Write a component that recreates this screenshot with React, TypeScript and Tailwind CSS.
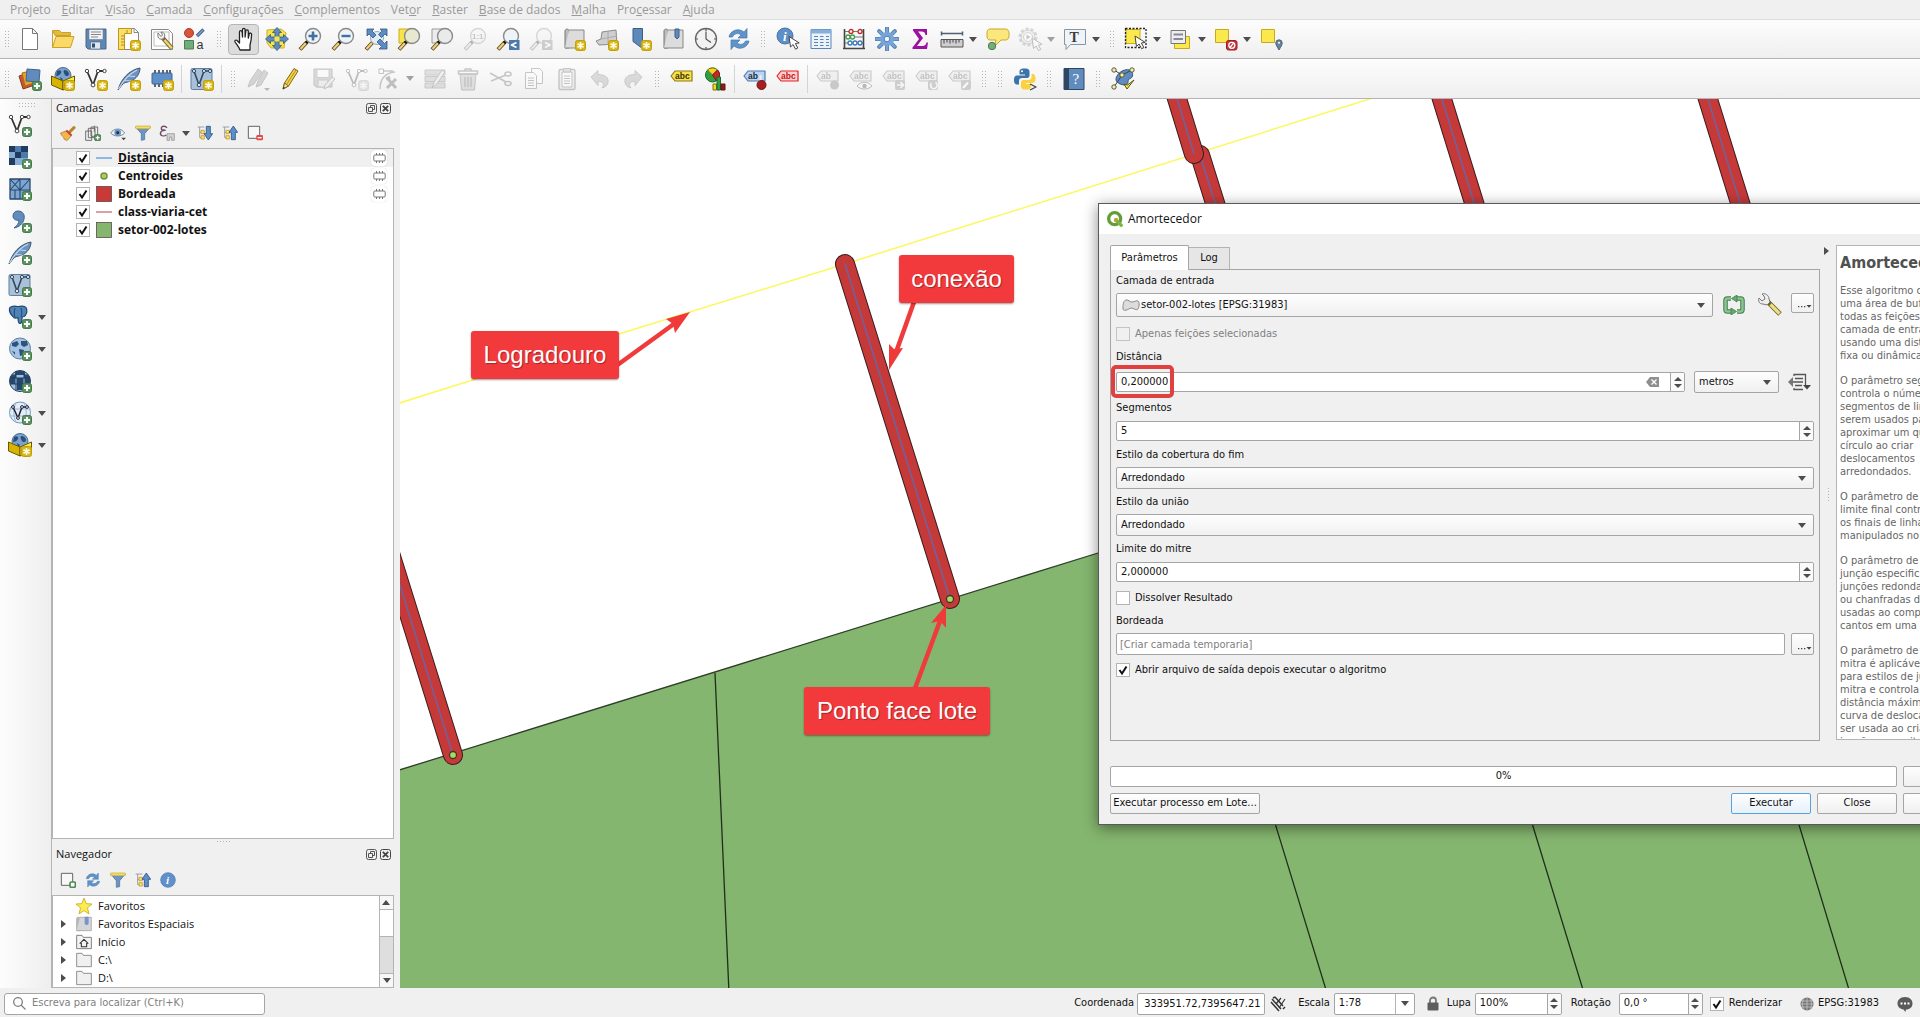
import { useId, type ReactNode } from 'react';

/* ---------- shared drawing helpers ---------- */

function Ico({ children, dim = false, small = false }: { children: ReactNode; dim?: boolean; small?: boolean }) {
  const size = small ? 'size-4 shrink-0' : 'size-6 shrink-0';
  const tone = dim ? ' opacity-30 grayscale' : '';
  return (
    <svg viewBox="0 0 24 24" className={size + tone} fill="none" strokeLinejoin="round" aria-hidden="true">
      {children}
    </svg>
  );
}

const Plus = () => (
  <g>
    <rect x="14.5" y="14.5" width="9" height="9" rx="2" fill="#5b9460" stroke="#45784a" />
    <path d="M19 16v6M16 19h6" stroke="#fff" strokeWidth="2" />
  </g>
);
const Star = () => (
  <g>
    <rect x="13.5" y="13.5" width="10" height="10" rx="2" fill="#d6b51a" stroke="#c4a000" />
    <path d="M18.500 15v7M15.400 16.700l6.200 3.600M21.600 16.700l-6.200 3.600" stroke="#fffbe0" strokeWidth="1.700" />
  </g>
);
const Lens = ({ fill = '#eef3f7' }: { fill?: string }) => (
  <g>
    <path d="M9 15L2 22.500" stroke="#5a4a20" strokeWidth="4" />
    <path d="M8 16L2.500 22" stroke="#f2cf7c" strokeWidth="2.200" />
    <path d="M10 14l-2 2" stroke="#111" strokeWidth="3" />
    <circle cx="15" cy="9" r="7.500" fill={fill} stroke="#8a8a8a" strokeWidth="1.400" />
  </g>
);
const Vee = () => (
  <g>
    <path d="M3 4l6 14 5-14h6" stroke="#333" strokeWidth="1.800" />
    <g fill="#fff" stroke="#444">
      <circle cx="3" cy="4" r="1.700" />
      <circle cx="14" cy="4" r="1.700" />
      <circle cx="20.500" cy="4" r="1.700" />
      <circle cx="9" cy="18" r="1.900" />
    </g>
  </g>
);
const Feather = () => (
  <g>
    <path d="M1 23C4 12 12 3 23 1c0 6-4 11-9 13-4 1.500-7 1-9 4z" fill="#6a93c1" stroke="#42586f" />
    <path d="M1.500 22C7 12 12 7 20 3M8 13.500l6 .5M12 9l6 .5" stroke="#c8daee" strokeWidth="1.100" />
  </g>
);
const VBox = () => (
  <g>
    <rect x="1" y="1.500" width="21" height="21" rx="1.500" fill="#a9c0da" stroke="#5f7f9f" />
    <path d="M4 4l5 14 5-14h6" stroke="#33475b" strokeWidth="1.600" />
    <g fill="#dfe9f3" stroke="#33475b">
      <circle cx="4" cy="4" r="1.600" />
      <circle cx="14" cy="4" r="1.600" />
      <circle cx="20" cy="4" r="1.600" />
      <circle cx="9" cy="18" r="1.800" />
    </g>
  </g>
);
const GlobeBox = () => (
  <g>
    <circle cx="12" cy="8.500" r="8" fill="#7ba3cf" stroke="#4a6a8c" />
    <path d="M6 4c3-2 5 0 4 2s-3 3-5 3M13 3c3 0 5 2 5 4s-3 3-4 1-2-3-1-5zM9 10l3 2-2 2z" fill="#2c4f77" />
    <path d="M.5 9L12 14v9L.5 18z" fill="#d8b400" stroke="#6a5600" />
    <path d="M23.500 9L12 14v9l11.500-5z" fill="#fcea4c" stroke="#6a5600" />
  </g>
);
const Refresh = () => (
  <g fill="#5f93c9" stroke="#4378ad" strokeWidth=".7">
    <path d="M2 10c1-6 9-10 15-5l3-3.500V11h-9l3-3c-3-2.500-7-1.500-8.500 2z" />
    <path d="M22 14c-1 6-9 10-15 5l-3 3.500V13h9l-3 3c3 2.500 7 1.500 8.500-2z" />
  </g>
);
const Cursor = ({ x, y }: { x: number; y: number }) => (
  <path
    transform={`translate(${x} ${y})`}
    d="M0 0l1.500 10.500 2.600-2.500 2.400 4.700 2.300-1.200-2.400-4.500 3.800-.6z"
    fill="#fff"
    stroke="#444"
  />
);
const Tag = ({ fill, stroke }: { fill: string; stroke: string }) => (
  <path d="M1 9l4-5h17v10H5z" fill={fill} stroke={stroke} strokeWidth="1.200" />
);
const TagText = ({ fill, t = 'abc' }: { fill: string; t?: string }) => (
  <text x="5" y="12" fontSize="8.500" fontWeight="700" fill={fill} fontFamily="Liberation Sans, sans-serif">
    {t}
  </text>
);
const Funnel = () => (
  <g>
    <path d="M1 3h22l-8.500 10v9l-5 1V13z" fill="#6c95c4" stroke="#476b94" />
    <rect x="1" y="1.500" width="22" height="4" rx="1" fill="#f4dc6a" stroke="#c9a92a" />
  </g>
);
const TreeArrow = ({ up = false }: { up?: boolean }) => (
  <g>
    <path d="M1 3h10M4 3v16h5M4 11h5" stroke="#999" strokeWidth="1.400" />
    <rect x="6" y="8" width="5" height="5" fill="#ffe066" stroke="#b78b1b" />
    <rect x="6" y="16" width="5" height="5" fill="#ffe066" stroke="#b78b1b" />
    <path
      d={up ? 'M14 22V11h-3.500l6.500-9.500 6.500 9.500H20v11z' : 'M14 2v11h-3.500l6.500 9.500 6.500-9.500H20V2z'}
      fill="#5f8fc8"
      stroke="#2f5687"
      strokeWidth="1.300"
    />
  </g>
);
const Sheet = () => (
  <g>
    <path d="M3 4c0-2.500 4-2.500 4 0v17H3z" fill="#bdbdbd" stroke="#777" />
    <path d="M7 3h15v18H3" fill="#dcdcdc" stroke="#888" />
  </g>
);

/* ---------- icons by name ---------- */

const icons: Record<string, ReactNode> = {
  newFile: <path d="M4.500 1.500h10l5 5v16h-15zM14.500 1.500v5h5" fill="#fff" stroke="#777" />,
  open: (
    <g stroke="#c9a227">
      <path d="M1.500 3.500h7l2 2h9v3H4z" fill="#e5b93c" />
      <path d="M1.500 4v16.500L5 9.500h18l-3.500 11h-18" fill="#fbd968" />
    </g>
  ),
  save: (
    <g>
      <path d="M2 2h20v20H4l-2-2z" fill="#5e86b4" stroke="#4a688c" />
      <rect x="5" y="2.500" width="14" height="10" fill="#f3f3f3" stroke="#6b7f95" strokeWidth=".6" />
      <path d="M7 5h10M7 7.500h10M7 10h7" stroke="#888" />
      <rect x="6.500" y="15" width="10" height="7" fill="#dfe6ee" stroke="#45607f" strokeWidth=".6" />
      <rect x="8" y="16.500" width="3" height="4" fill="#2f4f77" />
    </g>
  ),
  layout: (
    <g>
      <path d="M1.500 1.500h16l4 4v17h-20z" fill="#fff" stroke="#888" />
      <path d="M1.500 1.500h13v5h-7v16h-6z" fill="#fadf68" stroke="#c0961a" />
      <path d="M4 9h3M4 12h3M4 15h3M4 18h3M10 3v3" stroke="#b08a1a" />
      <path d="M17 1.500v4h4.500" stroke="#888" />
      <Star />
    </g>
  ),
  layouts: (
    <g>
      <path d="M1.500 2.500h17l4 4v16h-21z" fill="#fff" stroke="#888" />
      <rect x="4" y="5" width="15" height="14" stroke="#bbb" />
      <path d="M12 10L22 21.500" stroke="#7c6a2a" strokeWidth="4.200" />
      <path d="M14.500 13l7.300 8.300" stroke="#ecd774" strokeWidth="2.400" />
      <path d="M8 6c-1 4 1 7 5 6l1.500-2c1-3-1-5-3.500-5l1.500 3-1.500 1.500z" fill="#f3f3f3" stroke="#777" />
    </g>
  ),
  style: (
    <g>
      <circle cx="6" cy="6" r="4.500" fill="#d9543a" stroke="#a83c26" />
      <path d="M14 9l6.500-6.500" stroke="#3f648f" strokeWidth="3.400" />
      <path d="M14.500 8.500l5.500-5.500" stroke="#7ba0cb" strokeWidth="1.400" />
      <rect x="1.500" y="13.500" width="9" height="8.500" fill="#72ab7c" stroke="#4a7d55" />
      <text x="13.500" y="22" fontSize="12.500" fill="#333" fontFamily="Liberation Sans, sans-serif">
        a
      </text>
    </g>
  ),
  hand: (
    <path
      d="M8 23c-1-3-3-5-5-8-.8-1.700 1.200-2.600 2.300-1.300L7.500 16V5c0-1.800 2.400-1.800 2.600 0l.4 5V2.800c0-1.800 2.600-1.800 2.600 0V10l.7-6c.2-1.700 2.500-1.500 2.500.2V11l.9-4c.4-1.600 2.500-1.200 2.400.5-.2 5-.6 7.500-1.600 10.500V23z"
      fill="#fff"
      stroke="#222"
      strokeWidth="1.300"
    />
  ),
  pan: (
    <g>
      <path d="M2 3l14-1 5 4-2 15H6l-4-5z" fill="#f8e34a" stroke="#c9b01c" />
      <path
        d="M12 .5l4.500 5h-2.500v4.500h4.500V7.500l5 4.500-5 4.500V14h-4.500v4.500h2.500l-4.500 5-4.500-5h2.500V14H5.500v2.500l-5-4.500 5-4.500V10h4.500V5.500H7.500z"
        fill="#5c8cc4"
        stroke="#34587f"
        strokeWidth=".8"
      />
      <rect x="9.500" y="9.500" width="5" height="5" fill="#f8e34a" />
    </g>
  ),
  zoomIn: (
    <g>
      <Lens />
      <path d="M15 4.500v9M10.500 9h9" stroke="#41709f" strokeWidth="2.600" />
    </g>
  ),
  zoomOut: (
    <g>
      <Lens />
      <path d="M10.500 9h9" stroke="#41709f" strokeWidth="2.400" />
    </g>
  ),
  zoomFull: (
    <g>
      <path d="M9 15L2 22.500" stroke="#5a4a20" strokeWidth="4" />
      <path d="M8 16L2.500 22" stroke="#f2cf7c" strokeWidth="2.200" />
      <circle cx="13" cy="11" r="6.500" fill="#e4ecf3" stroke="#9ab" />
      <path
        d="M3 2h7L8 4l4 4-3 3-4-4-2 2zM23 2v7l-2-2-3.500 3.500-3-3L18 4l-2-2zM23 22h-8l2.500-2.500L13 15l3-3 4.500 4.500L23 14z"
        fill="#5c8cc4"
        stroke="#34587f"
        strokeWidth=".8"
      />
    </g>
  ),
  zoomSel: (
    <g>
      <rect x="2" y="2" width="12" height="14" fill="#f8e34a" stroke="#c9b01c" />
      <Lens fill="#e6e8d0" />
    </g>
  ),
  zoomLayer: (
    <g>
      <rect x="2" y="2" width="12" height="14" fill="#ececec" stroke="#999" />
      <Lens fill="#e9ebea" />
    </g>
  ),
  zoomNative: (
    <g>
      <Lens />
      <text x="9" y="12" fontSize="8" fontWeight="700" fill="#555" fontFamily="Liberation Sans, sans-serif">
        1:1
      </text>
    </g>
  ),
  zoomLast: (
    <g>
      <Lens />
      <rect x="13" y="13" width="10.500" height="10" fill="#4c78ab" />
      <path d="M20.500 15.500l-5 2.500 5 2.500" stroke="#fff" strokeWidth="1.700" />
    </g>
  ),
  zoomNext: (
    <g>
      <Lens />
      <rect x="13" y="13" width="10.500" height="10" fill="#777" />
      <path d="M16 15.500l5 2.500-5 2.500" stroke="#fff" strokeWidth="1.700" />
    </g>
  ),
  newMap: (
    <g>
      <Sheet />
      <Star />
    </g>
  ),
  new3d: (
    <g>
      <path d="M7 5l14-2 1 14-18 1L1 14l5-2z" fill="#cfcfcf" stroke="#8a8a8a" />
      <path d="M6 12l16-3M13 4v14" stroke="#aaa" />
      <Star />
    </g>
  ),
  bookmark: (
    <g>
      <path d="M5 1.500h9.500v20L5 14.500z" fill="#5e8abb" stroke="#3c5f88" />
      <Star />
    </g>
  ),
  bookmarks: (
    <g>
      <Sheet />
      <path d="M14 2h4v8l-2 2-2-2z" fill="#5e8abb" stroke="#3c5f88" />
    </g>
  ),
  clock: (
    <g>
      <circle cx="12" cy="12" r="10.500" fill="#f2f2f2" stroke="#666" strokeWidth="1.300" />
      <path d="M12 4.500V12l5 3.500M12 2v2M12 20v2M2 12h2M20 12h2" stroke="#555" strokeWidth="1.200" />
    </g>
  ),
  refresh: <Refresh />,
  identify: (
    <g>
      <circle cx="9" cy="9" r="8" fill="#5e8fc6" stroke="#4a77a8" />
      <text x="7" y="14" fontSize="13" fontStyle="italic" fontWeight="700" fill="#fff" fontFamily="Liberation Serif, serif">
        i
      </text>
      <Cursor x={13} y={9.500} />
    </g>
  ),
  table: (
    <g>
      <rect x="2" y="2.500" width="20" height="19" fill="#eaf2fa" stroke="#5785b5" />
      <rect x="2" y="2.500" width="20" height="4" fill="#86afd9" />
      <path d="M5 9.500h4M11 9.500h3.500M17 9.500h3M5 12.500h4M11 12.500h3.500M17 12.500h3M5 15.500h4M11 15.500h3.500M17 15.500h3M5 18.500h4M11 18.500h3.500M17 18.500h3" stroke="#5b84b0" />
    </g>
  ),
  abacus: (
    <g>
      <path d="M2.500 2v19M21.500 2v19M1 21.500h22" stroke="#444" strokeWidth="1.600" />
      <path d="M3 4.500h18M3 10h18M3 16h18" stroke="#777" />
      <g strokeWidth="1.300" fill="#fff">
        <g stroke="#c02a2a">
          <circle cx="9" cy="4.500" r="2" />
          <circle cx="18" cy="4.500" r="2" />
        </g>
        <g stroke="#39a04a">
          <circle cx="6" cy="10" r="2" />
          <circle cx="10.500" cy="10" r="2" />
        </g>
        <g stroke="#3c78b8">
          <circle cx="8" cy="16" r="2" />
          <circle cx="13" cy="16" r="2" />
          <circle cx="18" cy="16" r="2" />
        </g>
      </g>
    </g>
  ),
  gear: (
    <g>
      <path d="M12 1v22M1 12h22M4.200 4.200l15.600 15.600M19.800 4.200L4.200 19.800" stroke="#4f7fb5" strokeWidth="4" strokeLinecap="round" />
      <path d="M12 1.500v21M1.500 12h21M4.500 4.500l15 15M19.500 4.500l-15 15" stroke="#78a5d8" strokeWidth="2.400" strokeLinecap="round" />
      <circle cx="12" cy="12" r="7" fill="#78a5d8" />
      <circle cx="12" cy="12" r="2.800" fill="#f4f4f4" stroke="#4f7fb5" />
    </g>
  ),
  sigma: <path d="M5 2h14v6h-1.500c-.5-2.500-1.500-3.500-4-3.500H10l5 6.500-6 8h5.500c2.500 0 3.500-1.500 4-3.500H20l-1 6.500H4.500v-1.500L11 12 5 3.500z" fill="#9c12a0" />,
  ruler: (
    <g>
      <path d="M1 6.500h22M1.500 4.500v4M22.500 4.500v4" stroke="#4d5f73" strokeWidth="1.500" />
      <rect x="1" y="12.500" width="22" height="7.500" fill="#cfcfcf" stroke="#555" />
      <path d="M4 13v3.500M7 13v2.500M10 13v3.500M13 13v2.500M16 13v3.500M19 13v2.500" stroke="#444" />
    </g>
  ),
  tip: (
    <g>
      <path d="M4 2h15c2.500 0 4 1.500 4 4v3c0 2.500-1.500 4-4 4h-4l-7 7 2-7H4c-2 0-3-1.500-3-4V6c0-2.500 1-4 3-4z" fill="#fbe77c" stroke="#c9a92a" />
      <circle cx="6" cy="19" r="3.700" fill="#76ad78" stroke="#4a7c4e" />
    </g>
  ),
  action: (
    <g>
      <circle cx="10" cy="10" r="8" stroke="#888" strokeWidth="3" strokeDasharray="3 2" />
      <circle cx="10" cy="10" r="7" fill="#ddd" stroke="#777" />
      <circle cx="10" cy="10" r="4.500" fill="#fff" stroke="#888" />
      <path d="M8.500 7.500l4 2.500-4 2.500z" fill="#555" />
      <Cursor x={14} y={11} />
    </g>
  ),
  annotation: (
    <g>
      <path d="M1.500 2.500h21v15h-15L3 22.500v-5H1.500z" fill="#eef4f8" stroke="#8795a2" />
      <text x="6.500" y="15" fontSize="14" fontWeight="700" fill="#3b3b3b" fontFamily="Liberation Serif, serif">
        T
      </text>
    </g>
  ),
  select: (
    <g>
      <path d="M2 2.500h14v14H2z" fill="#fae84c" stroke="#c9b01c" />
      <rect x="1.500" y="1.500" width="20.500" height="19" stroke="#222" strokeWidth="1.300" strokeDasharray="2 1.500" />
      <Cursor x={11} y={9} />
    </g>
  ),
  selectValue: (
    <g>
      <rect x="5.500" y="9.500" width="15" height="12" fill="#fae84c" stroke="#c9a81c" />
      <rect x="2" y="3.500" width="14.500" height="13" fill="#eee" stroke="#777" />
      <path d="M4.500 7.500h9.500M4.500 12h9.500" stroke="#889" strokeWidth="2" />
    </g>
  ),
  deselect: (
    <g>
      <rect x="1.500" y="2.500" width="13" height="13" fill="#fae84c" stroke="#c9a81c" />
      <rect x="12.500" y="13.500" width="10.500" height="9.500" rx="2" fill="#c83237" stroke="#9c1f25" />
      <circle cx="17.800" cy="18.300" r="3" stroke="#fff" strokeWidth="1.300" />
      <path d="M16 20.500l3.600-4.300" stroke="#fff" strokeWidth="1.300" />
    </g>
  ),
  selectLoc: (
    <g>
      <rect x="1.500" y="2.500" width="13" height="13" fill="#fae84c" stroke="#c9a81c" />
      <path d="M19 23c-2-3.500-3.200-5-3.200-7a3.200 3.200 0 016.400 0c0 2-1.200 3.500-3.200 7z" fill="#66839c" stroke="#4b667e" />
      <circle cx="19" cy="15.800" r="1" fill="#fff" />
    </g>
  ),
  sources: (
    <g>
      <path d="M1 9l12-4 4 13-12 4z" fill="#c8562f" stroke="#8e3a1c" />
      <path d="M4 6l12-3 3 12-12 4z" fill="#e8a12e" stroke="#a66c12" />
      <path d="M9 2l13 1-1 12-13-1z" fill="#5f8cbd" stroke="#42648b" />
      <Plus />
    </g>
  ),
  geopackage: (
    <g>
      <GlobeBox />
      <Star />
    </g>
  ),
  newShape: (
    <g>
      <Vee />
      <Star />
    </g>
  ),
  newSpatialite: (
    <g>
      <Feather />
      <Star />
    </g>
  ),
  newMemory: (
    <g>
      <path d="M5 3v17M9 3v17M13 3v17M17 3v17M20 3v17" stroke="#333" strokeWidth="1.500" />
      <rect x="2" y="6" width="20" height="11" rx="1" fill="#5f8fc6" stroke="#3d6592" />
      <Star />
    </g>
  ),
  newVirtual: (
    <g>
      <VBox />
      <Star />
    </g>
  ),
  edits: (
    <g>
      <path d="M2 20l2-6L12 2l4 3-8 12zM10 20l2-6 6-11 4 3-7 12z" fill="#888" stroke="#555" />
      <path d="M18 21h6l-3 3z" fill="#333" />
    </g>
  ),
  pencil: (
    <g>
      <path d="M4 22l1.500-6L15 1.500l4 2.500L9.500 19z" fill="#f4d34a" stroke="#7b6514" />
      <path d="M4 22l1.500-6 4 3z" fill="#f0ddb8" stroke="#7b6514" />
      <path d="M7.500 17.500L17 3" stroke="#b48f1c" />
      <path d="M4 22l.6-2.200 1.300 1z" fill="#222" />
    </g>
  ),
  saveEdit: (
    <g>
      <path d="M2 2h18v18H4l-2-2z" fill="#999" stroke="#555" />
      <rect x="5" y="2.500" width="12" height="8" fill="#fff" stroke="#777" />
      <path d="M6 13h10v7H6z" fill="#ddd" stroke="#666" />
      <path d="M12 22l1-4 7-8 3 2-7 8z" fill="#ddd" stroke="#555" />
    </g>
  ),
  vertex: (
    <g>
      <path d="M3 22C3 12 8 6 18 5M4 4h12" stroke="#555" strokeWidth="1.400" />
      <rect x="2" y="2" width="4.500" height="4.500" fill="#fff" stroke="#444" />
      <path d="M10 21l9-9M11 12l8 9M9 12l4-2" stroke="#444" strokeWidth="3" />
    </g>
  ),
  modify: (
    <g>
      <path d="M2 3h20v5H2zM2 9.500h20v5H2zM2 16h20v5H2z" fill="#aaa" stroke="#666" />
      <path d="M9 21l2-6 8-12 3 2-8 12z" fill="#ddd" stroke="#555" />
    </g>
  ),
  trash: (
    <g>
      <path d="M4 7h16l-1.500 16h-13z" fill="#aaa" stroke="#555" />
      <path d="M2.500 4h19v3h-19zM9 4V2h6v2M9 10v10M12 10v10M15 10v10" stroke="#555" strokeWidth="1.500" />
    </g>
  ),
  cut: (
    <g stroke="#555" strokeWidth="1.600">
      <path d="M1 6l16 9M2 14l15-6" />
      <ellipse cx="19" cy="16.500" rx="3" ry="2" />
      <ellipse cx="19" cy="7" rx="3" ry="2" />
    </g>
  ),
  copy: (
    <g stroke="#555" fill="#fff">
      <path d="M9.500 1.500h8l3 3v12h-11z" />
      <path d="M3.500 5.500h8l3 3v13h-11z" />
      <path d="M6 11h6M6 13.500h6M6 16h6M6 18.500h6" />
    </g>
  ),
  paste: (
    <g stroke="#555">
      <rect x="4" y="2.500" width="16" height="20" rx="1.500" fill="#ddd" strokeWidth="1.400" />
      <rect x="7" y="5" width="10" height="15" fill="#fff" />
      <path d="M9 9h6M9 11.500h6M9 14h6M9 16.500h6" />
      <rect x="8.500" y="1.500" width="7" height="3.500" fill="#aaa" />
    </g>
  ),
  undo: <path d="M3 10l7-6.500v4c7 0 11 3 10 8-.6 3-3 5-6 5.500 3-4 1-7-4-6.500v4z" fill="#999" stroke="#666" />,
  redo: <path d="M21 10l-7-6.500v4c-7 0-11 3-10 8 .6 3 3 5 6 5.500-3-4-1-7 4-6.500v4z" fill="#999" stroke="#666" />,
  label: (
    <g>
      <Tag fill="#f8e04a" stroke="#8f7a14" />
      <TagText fill="#3b3208" />
    </g>
  ),
  diagram: (
    <g>
      <circle cx="9.500" cy="8" r="7" fill="#2ea043" stroke="#176b28" />
      <path d="M9.500 8L4.500 3a7 7 0 0110 0z" fill="#f5d427" stroke="#84700c" />
      <path d="M9.500 8l5-5c3 3 2.600 8-1 11z" fill="#c62828" stroke="#801414" />
      <path d="M10 17h3.500v6H10z" fill="#f5d427" stroke="#84700c" />
      <path d="M14 10h3.500v13H14z" fill="#2ea043" stroke="#176b28" />
      <path d="M18 17h4v6h-4z" fill="#8e1c1c" stroke="#611" />
    </g>
  ),
  labelPin: (
    <g>
      <Tag fill="#b8d4f2" stroke="#4a78b0" />
      <TagText fill="#1d2a3a" t="ab" />
      <path d="M17.500 16V8" stroke="#eee" strokeWidth="2" />
      <circle cx="18.500" cy="18" r="4.500" fill="#a81e1e" stroke="#741010" />
    </g>
  ),
  labelRed: (
    <g>
      <Tag fill="#ffd2d2" stroke="#e02020" />
      <TagText fill="#d01010" />
    </g>
  ),
  tagPin: (
    <g>
      <Tag fill="#ddd" stroke="#666" />
      <TagText fill="#444" t="ab" />
      <circle cx="18.500" cy="18" r="4.500" fill="#666" />
    </g>
  ),
  tagEye: (
    <g>
      <Tag fill="#ddd" stroke="#666" />
      <TagText fill="#444" />
      <path d="M8 19c4-5 11-5 15 0-4 4-11 4-15 0z" fill="#fff" stroke="#333" />
      <circle cx="15.500" cy="19" r="2.200" fill="#333" />
    </g>
  ),
  tagMove: (
    <g>
      <Tag fill="#ddd" stroke="#666" />
      <TagText fill="#444" />
      <rect x="13" y="13" width="10" height="10" rx="2" fill="#777" />
      <path d="M15 18h6M18.500 15l3 3-3 3" stroke="#fff" strokeWidth="1.600" />
    </g>
  ),
  tagRotate: (
    <g>
      <Tag fill="#ddd" stroke="#666" />
      <TagText fill="#444" />
      <rect x="13" y="13" width="10" height="10" rx="2" fill="#777" />
      <path d="M20.500 15.500a3.300 3.300 0 11-4 .5M16 21v-3" stroke="#fff" strokeWidth="1.500" />
    </g>
  ),
  tagEdit: (
    <g>
      <Tag fill="#ddd" stroke="#666" />
      <TagText fill="#444" />
      <rect x="13" y="13" width="10" height="10" rx="2" fill="#777" />
      <path d="M15 21l5-5.500" stroke="#fff" strokeWidth="2.400" />
    </g>
  ),
  python: (
    <g>
      <path d="M11.500 1.500c-5 0-5 2-5 3.500v2.500h5.500v1H4c-2.500 0-3 2.500-3 4.500s.5 4.500 3 4.500h2V14c0-2 1-3 3-3h5c1.700 0 2.500-1 2.500-2.500V5c0-1.500 0-3.500-5-3.500z" fill="#3b74a8" />
      <path d="M13 22.500c-5 0-5-2-5-3.500v-3.500c0-1.500 1-2.500 2.500-2.500h5c2 0 3-1 3-3V7h1.500c2 0 2.500 2.500 2.500 4.500s-.5 4-2.500 4.500h-7v1H18v2c0 1.500 0 3.500-5 3.500z" fill="#fbd23e" />
      <circle cx="9" cy="4.300" r="1" fill="#fff" />
      <path d="M17 17l6 3-6 3" stroke="#444" strokeWidth="1.300" />
    </g>
  ),
  help: (
    <g>
      <rect x="2" y="1.500" width="20" height="21" fill="#5f8bbd" stroke="#2d4663" />
      <rect x="2" y="1.500" width="5" height="21" fill="#2d4663" />
      <text x="10.500" y="17" fontSize="15" fill="#fff" fontFamily="Liberation Serif, serif">
        ?
      </text>
    </g>
  ),
  checker: (
    <g>
      <path d="M6 9c4-7 13-8 15-4s-1 7-3 7 1 7-5 6S3 14 6 9z" fill="#5f8cc0" stroke="#33557c" />
      <path d="M3 3l8 5 10-5M11 8L3 20" stroke="#444" />
      <g fill="#fbf08a" stroke="#555">
        <circle cx="3" cy="3" r="2.200" />
        <circle cx="21" cy="3" r="2.200" />
        <circle cx="11" cy="8" r="2.200" />
        <circle cx="3" cy="20" r="2.200" />
      </g>
      <path d="M13 17l3 5 7-9-6.500 5z" fill="#fbe84a" stroke="#5b5210" />
    </g>
  ),
  addVector: (
    <g>
      <Vee />
      <Plus />
    </g>
  ),
  addRaster: (
    <g>
      <rect x="1" y="1" width="19" height="19" fill="#86acd4" />
      <path d="M1 1h6v6H1zM13 1h7v6h-7zM7 7h6v6H7zM1 13h6v7H1z" fill="#1f3b5e" />
      <path d="M7 1h6v6H7zM13 7h7v6h-7z" fill="#4d7aac" />
      <Plus />
    </g>
  ),
  addMesh: (
    <g>
      <rect x="2" y="2" width="20" height="20" fill="#7ba6d3" stroke="#2b4869" strokeWidth="1.300" />
      <path d="M2 13h20M12 2v20M2 2l10 11M12 2L2 13M12 13L22 2M7 13v9" stroke="#2b4869" strokeWidth="1.100" />
      <Plus />
    </g>
  ),
  addDelimited: (
    <g>
      <path d="M10 2c5 0 7 4 6 8-1 5-5 8-10 9 3-2 5-5 5-8-3 1-6-1-6-4s2-5 5-5z" fill="#5f8cbd" stroke="#3e6289" />
      <Plus />
    </g>
  ),
  addSpatialite: (
    <g>
      <Feather />
      <Plus />
    </g>
  ),
  addVirtual: (
    <g>
      <VBox />
      <Plus />
    </g>
  ),
  addPostgis: (
    <g>
      <path d="M2 2.500c3-2.500 6-1 8-1s6-1.500 8 1c2 4 0 8-2 9 0 0-2 0-2 2 0 3 0 5-2 5s-2-3-2-6c-2 1-4 1-5-1-2-2-5-5-3-9z" fill="#4e83b8" stroke="#23476c" strokeWidth="1.200" />
      <path d="M7 3c-1 4-1 7 0 9M13 3c1 3 1 6 0 9" stroke="#23476c" />
      <Plus />
    </g>
  ),
  addWms: (
    <g>
      <circle cx="12" cy="11.500" r="10.500" fill="#a5c3e4" stroke="#5f7f9f" />
      <path d="M4 6l5-2 2 3-3 3-4-1zM13 4h6l1 4-4 2-3-2zM11 12l5 1-1 5-3 1zM4 14l3 1v3z" fill="#2d527b" />
      <Plus />
    </g>
  ),
  addXyz: (
    <g>
      <circle cx="12" cy="12" r="10.500" fill="#9fc0e4" stroke="#213c5a" />
      <path d="M8 2h8l1.500 4H6.500zM4 5.500h4V9H2zM16 5.500h4L22 9h-6zM2 9h5v6H2zM17 9h5v6h-5zM9 15h6v6H9z" fill="#27486e" />
      <path d="M9 9h6v6H9z" fill="#27486e" />
      <path d="M2 9h20M2 15h20M8 2.500v19M16 2.500v19" stroke="#213c5a" />
      <Plus />
    </g>
  ),
  addWfs: (
    <g>
      <circle cx="12" cy="11.500" r="10.500" fill="#e4eef8" stroke="#7197c0" />
      <path d="M1.500 8h21M1.500 15h21M8 2c-3 6-3 13 0 19M16 2c3 6 3 13 0 19" stroke="#9ab8d8" />
      <path d="M5 6l5 11 4-11h5" stroke="#223" strokeWidth="1.500" />
      <g fill="#fff" stroke="#223">
        <circle cx="5" cy="6" r="1.400" />
        <circle cx="14" cy="6" r="1.400" />
        <circle cx="19" cy="6" r="1.400" />
        <circle cx="10" cy="17" r="1.400" />
      </g>
      <Plus />
    </g>
  ),
  brush: (
    <g>
      <path d="M13 12l8-8" stroke="#b5842c" strokeWidth="4.500" strokeLinecap="round" />
      <path d="M1 12l8-3 8 7-6 7c-2 0-4-1-5-2 0-2-1-3-2-4s-3-3-3-5z" fill="#f0b84c" stroke="#a86a20" />
      <path d="M9.500 8l8 8" stroke="#c9402c" strokeWidth="3" />
    </g>
  ),
  addGroup: (
    <g stroke="#666" strokeWidth="1.400">
      <path d="M1 9h9v14H1z" />
      <path d="M5 5h10v14H5z" />
      <path d="M9 3h10v14H9zM14 1v9" />
      <Plus />
    </g>
  ),
  eye: (
    <g>
      <path d="M1 12C6 4 17 4 22 12c-5 6-16 6-21 0z" fill="#eef3f8" stroke="#7a8b9c" strokeWidth="1.500" />
      <circle cx="11.500" cy="11.500" r="5" fill="#6a94c2" />
      <circle cx="11.500" cy="11.500" r="2.200" fill="#1d3048" />
      <path d="M17 19h7l-3.500 4z" fill="#444" />
    </g>
  ),
  funnel: <Funnel />,
  epsilon: (
    <g>
      <path d="M12 4C8 0 2 2 4 7l5 1C3 8 1 12 3 15c2 2 6 1.500 8 0" stroke="#6a4a66" strokeWidth="2.200" />
      <path d="M12 13h11v10h-4v-5h-3v5h-4z" fill="#d2d2d2" stroke="#888" />
    </g>
  ),
  expand: <TreeArrow />,
  collapse: <TreeArrow up />,
  remove: (
    <g>
      <rect x="2" y="2" width="17" height="18" fill="#f7f7f7" stroke="#666" strokeWidth="1.500" />
      <rect x="14" y="15" width="10" height="8" rx="2" fill="#e04a4a" />
      <path d="M16 19h6" stroke="#fff" strokeWidth="2" />
    </g>
  ),
  addLayer: (
    <g>
      <rect x="2" y="2" width="17" height="18" fill="#f7f7f7" stroke="#666" strokeWidth="1.500" />
      <rect x="15" y="15" width="8" height="8" rx="2" fill="#fff" stroke="#4c8a52" strokeWidth="2.500" />
    </g>
  ),
  info: (
    <g>
      <circle cx="12" cy="12" r="11" fill="#5f90cc" stroke="#4776a8" />
      <text x="9" y="18" fontSize="17" fontStyle="italic" fontWeight="700" fill="#fff" fontFamily="Liberation Serif, serif">
        i
      </text>
    </g>
  ),
  star: <path d="M12 0l3.300 8.500 8.700.5-6.800 5.700L19.500 24 12 18.800 4.500 24l2.300-9.300L0 9l8.700-.5z" fill="#fbee4e" stroke="#c9a92a" strokeWidth="1.300" />,
  book: (
    <g>
      <path d="M1 4c0-3 5-3 5 0v18H1z" fill="#b9b9b9" stroke="#999" />
      <path d="M6 2h17v20H1" fill="#d4d6da" stroke="#999" />
      <path d="M13 1h6v11l-3 2-3-2z" fill="#7c93c4" />
    </g>
  ),
  home: (
    <g>
      <path d="M1 2h8l2 3h12v17H1z" fill="#f3f3f3" stroke="#777" strokeWidth="1.400" />
      <path d="M6 14l6-6 6 6h-2v5H8v-5z" stroke="#333" strokeWidth="1.600" />
    </g>
  ),
  folder: <path d="M1 2h8l2 3h12v17H1z" fill="#f0f0f0" stroke="#888" strokeWidth="1.400" />,
};

/* ---------- small controls ---------- */

const Caret = () => (
  <svg viewBox="0 0 8 5" className="h-[5px] w-2 shrink-0" aria-hidden="true">
    <path d="M0 0h8L4 5z" fill="#4d4d4d" />
  </svg>
);

const dotsBg =
  'bg-[radial-gradient(circle,#b4b4b4_0.7px,transparent_0.9px)] bg-[length:3px_3px]';

function Grip({ first = false }: { first?: boolean }) {
  return (
    <span className={first ? 'flex w-[13px] shrink-0 justify-center' : 'flex w-4 shrink-0 justify-center'}>
      <span className={'h-[18px] w-[6px] ' + dotsBg} />
    </span>
  );
}

const Sep = () => <span className="mx-[3px] h-7 w-px shrink-0 bg-[#d4d4d4]" />;

type Item = { i: string; t: string; dim?: boolean; menu?: boolean; on?: boolean };

function ToolButton({ i, t, dim, menu, on }: Item) {
  return (
    <button
      type="button"
      aria-label={t}
      title={t}
      disabled={dim}
      className={
        menu
          ? 'flex h-8 w-[45px] shrink-0 items-center gap-[5px] pl-1'
          : on
            ? 'mx-px flex h-[31px] w-[31px] shrink-0 items-center justify-center rounded-sm border border-[#b5b5b5] bg-[#dcdcdc]'
            : 'flex h-8 w-[33px] shrink-0 items-center justify-center'
      }
    >
      <Ico dim={dim}>{icons[i]}</Ico>
      {menu && (
        <span className={dim ? 'opacity-50' : ''}>
          <Caret />
        </span>
      )}
    </button>
  );
}

function Toolbar({ items, label, tall = false }: { items: (Item | 'grip' | 'sep')[]; label: string; tall?: boolean }) {
  return (
    <div
      role="toolbar"
      aria-label={label}
      className={
        (tall ? 'h-10' : 'h-[39px]') +
        ' flex shrink-0 items-center border-b border-[#b4b4b4] bg-linear-to-b from-[#fdfdfd] to-[#efefef]'
      }
    >
      {items.map((it, n) =>
        it === 'grip' ? <Grip key={n} first={n === 0} /> : it === 'sep' ? <Sep key={n} /> : <ToolButton key={n} {...it} />,
      )}
    </div>
  );
}

function Check({ label, checked = false, disabled = false, bold = false }: { label: ReactNode; checked?: boolean; disabled?: boolean; bold?: boolean }) {
  const id = useId();
  return (
    <span className="flex h-[14px] items-center">
      <span className="relative size-[14px] shrink-0">
        <input
          id={id}
          type="checkbox"
          defaultChecked={checked}
          disabled={disabled}
          className={
            disabled
              ? 'peer block size-[14px] appearance-none border border-[#c4c4c4] bg-[#f0f0f0]'
              : 'peer block size-[14px] appearance-none border border-[#b4b4b4] bg-white'
          }
        />
        <svg viewBox="0 0 14 14" className="pointer-events-none absolute inset-0 hidden size-[14px] peer-checked:block" aria-hidden="true">
          <path d="M3.500 7l2.500 3.500L10.500 3.500" fill="none" stroke="#111" strokeWidth="2" />
        </svg>
      </span>
      <label htmlFor={id} className={bold ? 'flex items-center font-bold' : disabled ? 'pl-[5px] text-[#808080]' : 'pl-[5px]'}>
        {label}
      </label>
    </span>
  );
}

function Spin({ id, value, clear = false, className, label }: { id?: string; value: string; clear?: boolean; className: string; label?: string }) {
  return (
    <span className={'flex overflow-hidden rounded-[2px] border border-[#a5a5a5] bg-white ' + className}>
      <input id={id} aria-label={label} defaultValue={value} className="min-w-0 flex-1 bg-transparent pl-1 outline-none" />
      {clear && (
        <button type="button" aria-label="Limpar" className="mr-[11px] flex items-center">
          <svg viewBox="0 0 13 10" className="h-[10px] w-[13px]" aria-hidden="true">
            <path d="M4 0h9v10H4L0 5z" fill="#8f8f8f" />
            <path d="M5.500 2.500l5 5M10.500 2.500l-5 5" stroke="#fff" strokeWidth="1.300" />
          </svg>
        </button>
      )}
      <span className="flex w-[14px] shrink-0 flex-col items-center justify-center gap-[3px] border-l border-[#a5a5a5] bg-[#fafafa]">
        <button type="button" aria-label="Aumentar" className="block">
          <svg viewBox="0 0 8 4" className="block h-1 w-2" aria-hidden="true">
            <path d="M0 4h8L4 0z" fill="#4d4d4d" />
          </svg>
        </button>
        <button type="button" aria-label="Diminuir" className="block">
          <svg viewBox="0 0 8 4" className="block h-1 w-2" aria-hidden="true">
            <path d="M0 0h8L4 4z" fill="#4d4d4d" />
          </svg>
        </button>
      </span>
    </span>
  );
}

const faceBg = 'rounded-[2px] border border-[#a5a5a5] bg-linear-to-b from-[#fefefe] to-[#f0f0f0]';

function Combo({ id, value, className, icon, label }: { id?: string; value: string; className: string; icon?: ReactNode; label?: string }) {
  return (
    <span className={'relative flex items-center ' + faceBg + ' ' + className}>
      {icon}
      <select id={id} aria-label={label} className={'h-full min-w-0 flex-1 appearance-none bg-transparent outline-none ' + (icon ? 'pl-px' : 'pl-1')}>
        <option>{value}</option>
      </select>
      <span className="pointer-events-none absolute inset-y-0 right-[7px] flex items-center">
        <Caret />
      </span>
    </span>
  );
}

const DotsButton = ({ label, className }: { label: string; className: string }) => (
  <button type="button" aria-label={label} className={'relative w-[23px] shrink-0 ' + faceBg + ' ' + className}>
    <svg viewBox="0 0 21 20" className="absolute right-0 bottom-0 h-5 w-[21px]" aria-hidden="true">
      <path d="M6 14h1.300v1.300H6zM9 14h1.300v1.300H9zM12 14h1.300v1.300H12zM14.500 13h5L17 15.700z" fill="#444" />
    </svg>
  </button>
);

/* ---------- page data ---------- */

const menus: [string, string, string][] = [
  ['Pro', 'j', 'eto'],
  ['', 'E', 'ditar'],
  ['', 'V', 'isão'],
  ['', 'C', 'amada'],
  ['', 'C', 'onfigurações'],
  ['', 'C', 'omplementos'],
  ['Vet', 'o', 'r'],
  ['', 'R', 'aster'],
  ['', 'B', 'ase de dados'],
  ['', 'M', 'alha'],
  ['Pro', 'c', 'essar'],
  ['', 'A', 'juda'],
];

const bar1: (Item | 'grip' | 'sep')[] = [
  'grip',
  { i: 'newFile', t: 'Novo' },
  { i: 'open', t: 'Abrir' },
  { i: 'save', t: 'Salvar' },
  { i: 'layout', t: 'Novo layout' },
  { i: 'layouts', t: 'Gerenciador de layouts' },
  { i: 'style', t: 'Gerenciador de estilos' },
  'grip',
  { i: 'hand', t: 'Deslocar mapa', on: true },
  { i: 'pan', t: 'Deslocar para a seleção' },
  { i: 'zoomIn', t: 'Aproximar' },
  { i: 'zoomOut', t: 'Afastar' },
  { i: 'zoomFull', t: 'Ver tudo' },
  { i: 'zoomSel', t: 'Aproximar à seleção' },
  { i: 'zoomLayer', t: 'Aproximar à camada' },
  { i: 'zoomNative', t: 'Resolução nativa', dim: true },
  { i: 'zoomLast', t: 'Última visualização' },
  { i: 'zoomNext', t: 'Próxima visualização', dim: true },
  { i: 'newMap', t: 'Nova vista de mapa' },
  { i: 'new3d', t: 'Nova vista 3D' },
  { i: 'bookmark', t: 'Novo favorito' },
  { i: 'bookmarks', t: 'Mostrar favoritos' },
  { i: 'clock', t: 'Controlador temporal' },
  { i: 'refresh', t: 'Atualizar' },
  'grip',
  { i: 'identify', t: 'Identificar feições' },
  { i: 'table', t: 'Tabela de atributos' },
  { i: 'abacus', t: 'Calculadora de campo' },
  { i: 'gear', t: 'Caixa de ferramentas' },
  { i: 'sigma', t: 'Resumo estatístico' },
  { i: 'ruler', t: 'Medir', menu: true },
  { i: 'tip', t: 'Dicas de mapa' },
  { i: 'action', t: 'Executar ação', dim: true, menu: true },
  { i: 'annotation', t: 'Anotação', menu: true },
  'grip',
  { i: 'select', t: 'Selecionar feições', menu: true },
  { i: 'selectValue', t: 'Selecionar por valor', menu: true },
  { i: 'deselect', t: 'Desfazer seleção', menu: true },
  { i: 'selectLoc', t: 'Selecionar por localização' },
];

const bar2: (Item | 'grip' | 'sep')[] = [
  'grip',
  { i: 'sources', t: 'Gerenciador de fontes' },
  { i: 'geopackage', t: 'Nova camada GeoPackage' },
  { i: 'newShape', t: 'Nova camada shapefile' },
  { i: 'newSpatialite', t: 'Nova camada SpatiaLite' },
  { i: 'newMemory', t: 'Nova camada temporária' },
  'sep',
  { i: 'newVirtual', t: 'Nova camada virtual' },
  'sep',
  'grip',
  { i: 'edits', t: 'Edições atuais', dim: true },
  { i: 'pencil', t: 'Alternar edição' },
  { i: 'saveEdit', t: 'Salvar edições', dim: true },
  { i: 'newShape', t: 'Adicionar feição', dim: true },
  { i: 'vertex', t: 'Ferramenta de vértice', dim: true, menu: true },
  { i: 'modify', t: 'Modificar atributos', dim: true },
  { i: 'trash', t: 'Excluir', dim: true },
  { i: 'cut', t: 'Recortar', dim: true },
  { i: 'copy', t: 'Copiar', dim: true },
  { i: 'paste', t: 'Colar', dim: true },
  { i: 'undo', t: 'Desfazer', dim: true },
  { i: 'redo', t: 'Refazer', dim: true },
  'grip',
  { i: 'label', t: 'Opções de rótulo' },
  { i: 'diagram', t: 'Opções de diagrama' },
  'sep',
  { i: 'labelPin', t: 'Rótulos fixados' },
  { i: 'labelRed', t: 'Rótulos não posicionados' },
  'sep',
  { i: 'tagPin', t: 'Fixar rótulos', dim: true },
  { i: 'tagEye', t: 'Mostrar rótulos', dim: true },
  { i: 'tagMove', t: 'Mover rótulo', dim: true },
  { i: 'tagRotate', t: 'Girar rótulo', dim: true },
  { i: 'tagEdit', t: 'Alterar rótulo', dim: true },
  'grip',
  'grip',
  { i: 'python', t: 'Terminal Python' },
  'grip',
  { i: 'help', t: 'Ajuda' },
  'grip',
  { i: 'checker', t: 'Verificador de topologia' },
];

const sideTools: Item[] = [
  { i: 'addVector', t: 'Adicionar camada vetorial' },
  { i: 'addRaster', t: 'Adicionar camada raster' },
  { i: 'addMesh', t: 'Adicionar malha' },
  { i: 'addDelimited', t: 'Adicionar texto delimitado' },
  { i: 'addSpatialite', t: 'Adicionar SpatiaLite' },
  { i: 'addVirtual', t: 'Adicionar camada virtual' },
  { i: 'addPostgis', t: 'Adicionar PostGIS', menu: true },
  { i: 'addWms', t: 'Adicionar WMS', menu: true },
  { i: 'addXyz', t: 'Adicionar XYZ' },
  { i: 'addWfs', t: 'Adicionar WFS', menu: true },
  { i: 'geopackage', t: 'GeoPackage', menu: true },
];

const layers: { name: string; kind: 'line' | 'dot' | 'fill'; color: string; temp: boolean }[] = [
  { name: 'Distância', kind: 'line', color: '#8db8e4', temp: true },
  { name: 'Centroides', kind: 'dot', color: '#a5b95c', temp: true },
  { name: 'Bordeada', kind: 'fill', color: '#c93a37', temp: true },
  { name: 'class-viaria-cet', kind: 'line', color: '#dca0a4', temp: false },
  { name: 'setor-002-lotes', kind: 'fill', color: '#85b66f', temp: false },
];

const helpText: string[][] = [
  ['Esse algoritmo calcula', 'uma área de buffer', 'todas as feições', 'camada de entrada,', 'usando uma distância', 'fixa ou dinâmica.'],
  ['O parâmetro segmento', 'controla o número', 'segmentos de linha', 'serem usados para', 'aproximar um quarto', 'círculo ao criar', 'deslocamentos', 'arredondados.'],
  ['O parâmetro de estilo', 'limite final controla', 'os finais de linha', 'manipulados no buffer.'],
  ['O parâmetro de estilo', 'junção especifica', 'junções redondas,', 'ou chanfradas devem', 'usadas ao compensar', 'cantos em uma linha.'],
  ['O parâmetro de limite', 'mitra é aplicável', 'para estilos de junção', 'mitra e controla a', 'distância máxima', 'curva de deslocamento', 'ser usada ao criar', 'junção com mitra.'],
];

/* ---------- docks ---------- */

function DockTitle({ children }: { children: ReactNode }) {
  return (
    <div className="flex h-[19px] shrink-0 items-center justify-between pr-[3px] pl-1">
      <h2>{children}</h2>
      <span className="flex gap-[3px]">
        <button type="button" aria-label="Flutuar">
          <svg viewBox="0 0 11 11" className="block size-[11px]" fill="none" stroke="#555" aria-hidden="true">
            <rect x=".5" y=".5" width="10" height="10" rx="2" />
            <path d="M4.500 4.500v-2h4v4h-2M2.500 4.500h4v4h-4z" />
          </svg>
        </button>
        <button type="button" aria-label="Fechar">
          <svg viewBox="0 0 11 11" className="block size-[11px]" fill="none" stroke="#444" aria-hidden="true">
            <rect x=".5" y=".5" width="10" height="10" rx="2" />
            <path d="M2.800 2.800l5.400 5.400M8.200 2.800L2.800 8.200" strokeWidth="1.800" />
          </svg>
        </button>
      </span>
    </div>
  );
}

const DockButton = ({ i, t, menu }: Item) => (
  <button type="button" aria-label={t} title={t} className={menu ? 'flex w-[37px] items-center gap-[7px] pl-[4px]' : 'flex w-[25px] justify-center'}>
    <Ico small>{icons[i]}</Ico>
    {menu && <Caret />}
  </button>
);

function LayersDock() {
  return (
    <section className="flex min-h-0 flex-1 flex-col">
      <DockTitle>Camadas</DockTitle>
      <div className="flex h-[30px] shrink-0 items-center pl-[3px]">
        <DockButton i="brush" t="Estilos" />
        <DockButton i="addGroup" t="Adicionar grupo" />
        <DockButton i="eye" t="Temas" />
        <DockButton i="funnel" t="Filtrar" />
        <DockButton i="epsilon" t="Filtrar por expressão" menu />
        <DockButton i="expand" t="Expandir" />
        <DockButton i="collapse" t="Recolher" />
        <DockButton i="remove" t="Remover" />
      </div>
      <ul className="min-h-0 flex-1 border border-[#b4b4b4] bg-white text-[12px]">
        {layers.map((l, n) => (
          <li key={l.name} className={n === 0 ? 'flex h-[18px] items-center justify-between bg-[#f0f0f0] pr-[6px] pl-[23px]' : 'flex h-[18px] items-center justify-between pr-[6px] pl-[23px]'}>
            <Check
              checked
              bold
              label={
                <>
                  <svg viewBox="0 0 16 16" className="mr-[6px] ml-[6px] size-4 shrink-0" aria-hidden="true">
                    {l.kind === 'line' && <path d="M0 8h16" stroke={l.color} strokeWidth="2" />}
                    {l.kind === 'dot' && <circle cx="8" cy="8" r="3" fill="#a9cf6a" stroke="#7d8f3a" strokeWidth="1.500" />}
                    {l.kind === 'fill' && <rect x=".5" y=".5" width="15" height="15" fill={l.color} stroke="#5a4a4a" strokeWidth=".8" />}
                  </svg>
                  <span className={n === 0 ? 'underline' : ''}>{l.name}</span>
                </>
              }
            />
            {l.temp && (
              <button type="button" aria-label={'Camada temporária ' + l.name} className="flex size-4 items-center justify-center rounded-sm bg-white shadow-[0_0_1px_#bbb]">
                <svg viewBox="0 0 13 10" className="h-[10px] w-[13px]" fill="none" stroke="#777" aria-hidden="true">
                  <path d="M3.500 0v2M6.500 0v2M9.500 0v2M3.500 8v2M6.500 8v2M9.500 8v2" />
                  <rect x=".8" y="2" width="11.400" height="6" rx="1" />
                </svg>
              </button>
            )}
          </li>
        ))}
      </ul>
    </section>
  );
}

const browser: [string, string, boolean][] = [
  ['star', 'Favoritos', false],
  ['book', 'Favoritos Espaciais', true],
  ['home', 'Início', true],
  ['folder', 'C:\\', true],
  ['folder', 'D:\\', true],
];

function BrowserDock() {
  return (
    <section className="flex shrink-0 flex-col">
      <DockTitle>Navegador</DockTitle>
      <div className="flex h-[31px] shrink-0 items-center pl-[3px]">
        <DockButton i="addLayer" t="Adicionar camada" />
        <DockButton i="refresh" t="Atualizar" />
        <DockButton i="funnel" t="Filtrar navegador" />
        <DockButton i="collapse" t="Recolher tudo" />
        <DockButton i="info" t="Propriedades" />
      </div>
      <div className="flex h-[93px] border border-[#b4b4b4] bg-white">
        <ul className="flex-1 pt-px">
          {browser.map(([icon, name, tree]) => (
            <li key={name} className="flex h-[18px] items-center pl-2">
              <svg viewBox="0 0 5 8" className="mr-[10px] h-2 w-[5px]" aria-hidden="true">
                {tree && <path d="M0 0l5 4-5 4z" fill="#4d4d4d" />}
              </svg>
              <span className="mr-[6px] flex">
                <Ico small>{icons[icon]}</Ico>
              </span>
              {name}
            </li>
          ))}
        </ul>
        <div className="flex w-[14px] flex-col border-l border-[#b4b4b4] bg-[#dedede]">
          <button type="button" aria-label="Rolar para cima" className="flex h-[14px] rotate-180 items-center justify-center border-t border-[#b4b4b4] bg-[#f7f7f7]">
            <Caret />
          </button>
          <div className="h-[27px] border-b border-[#b4b4b4] bg-white" />
          <button type="button" aria-label="Rolar para baixo" className="mt-auto flex h-[14px] items-center justify-center border-t border-[#b4b4b4] bg-[#f7f7f7]">
            <Caret />
          </button>
        </div>
      </div>
    </section>
  );
}

/* ---------- map ---------- */

function Connection({ x1, y1, x2, y2 }: { x1: number; y1: number; x2: number; y2: number }) {
  return (
    <g strokeLinecap="round">
      <path d={`M${x1} ${y1}L${x2} ${y2}`} stroke="#3a1c1c" strokeWidth="20" />
      <path d={`M${x1} ${y1}L${x2} ${y2}`} stroke="#c53a39" strokeWidth="18" />
      <path d={`M${x1} ${y1}L${x2} ${y2}`} stroke="#6d63a0" strokeWidth="1.500" />
    </g>
  );
}

function MapDrawing() {
  return (
    <svg viewBox="400 99 1520 889" preserveAspectRatio="xMinYMin slice" className="absolute inset-0 size-full" fill="none" aria-hidden="true">
      <path d="M380 776L1098 553 1940 292V1000H380z" fill="#85b66f" stroke="#2e3f28" strokeWidth="1.300" />
      <path d="M715 673l14 320M1229 673l98 320M1486 673l98 320M1753 673l97 320" stroke="#1f2f1a" strokeWidth="1.300" />
      <path d="M390 406L619 334 845 264 1379 96" stroke="#fbf95a" strokeWidth="1.500" />
      <Connection x1={349} y1={422} x2={453} y2={755} />
      <Connection x1={845} y1={264} x2={950} y2={599} />
      <Connection x1={1200} y1={155} x2={1230} y2={251} />
      <Connection x1={1167} y1={66} x2={1194} y2={154} />
      <Connection x1={1432} y1={67} x2={1489} y2={251} />
      <Connection x1={1698} y1={67} x2={1755} y2={251} />
      <g fill="#a9d86a" stroke="#3b3b20" strokeWidth="1.300">
        <circle cx="453" cy="755" r="3.500" />
        <circle cx="950" cy="599" r="3.500" />
      </g>
      <g stroke="#ef3b3b" strokeWidth="4.500">
        <path d="M616 366l62-45" />
        <path d="M914 302l-19 53" />
        <path d="M914 691l26-70" />
      </g>
      <g fill="#f03a3a">
        <path d="M690 312l-24 7 7 5 2 9z" />
        <path d="M889 370l0-26 5 5 9-1z" />
        <path d="M946 605l-15 18 9-2 6 7z" />
      </g>
    </svg>
  );
}

const callout =
  'absolute flex h-12 items-center justify-center rounded-[3px] bg-[#f23a3c] font-[Liberation_Sans,Arial,sans-serif] text-[24px] leading-none text-white shadow-[0_1px_2px_#0006] [text-shadow:1px_1px_1px_#0005]';

/* ---------- processing dialog ---------- */

const dlgLabel = 'block h-[14px] leading-[14px]';

function Dialog() {
  return (
    <div
      role="dialog"
      aria-label="Amortecedor"
      className="absolute top-[104px] left-[698px] flex h-[622px] w-[940px] flex-col border border-[#5a5a5a] bg-[#f0f0f0] font-[DejaVu_Sans_Condensed,Noto_Sans,sans-serif] text-[11px] shadow-[0_3px_14px_#0007]"
    >
      <header className="flex h-[30px] shrink-0 items-center gap-[5px] bg-white pl-2 font-[Open_Sans,Noto_Sans,sans-serif] text-[12px]">
        <svg viewBox="0 0 24 24" className="size-4" fill="none" aria-hidden="true">
          <circle cx="11.500" cy="11.500" r="9" stroke="#62a037" strokeWidth="5" />
          <path d="M12 12l11 11" stroke="#7cb342" strokeWidth="5" />
          <path d="M11 11l6 0-6 6z" fill="#e98a2b" />
        </svg>
        <span>Amortecedor</span>
      </header>
      <div className="flex min-h-0 flex-1 pt-[11px] pl-[11px]">
        <div className="flex w-[710px] shrink-0 flex-col">
          <div role="tablist" className="flex h-6 items-end">
            <button role="tab" type="button" aria-selected="true" className="relative z-10 -mb-px h-[25px] w-[79px] rounded-t-[2px] border border-b-0 border-[#a5a5a5] bg-white">
              Parâmetros
            </button>
            <button role="tab" type="button" aria-selected="false" className="h-[22px] w-[41px] border border-b-0 border-l-0 border-[#b4b4b4] bg-[#e6e6e6]">
              Log
            </button>
          </div>
          <div role="tabpanel" className="flex h-[472px] flex-col border border-[#a5a5a5] px-[5px] pt-[4px]">
            <label htmlFor="camada" className={dlgLabel}>Camada de entrada</label>
            <div className="mt-[5px] flex h-6 items-start">
              <Combo
                id="camada"
                value="setor-002-lotes [EPSG:31983]"
                className="h-6 flex-1"
                icon={
                  <svg viewBox="0 0 18 13" className="ml-[5px] h-[13px] w-[18px] shrink-0" aria-hidden="true">
                    <path d="M1 9c0-3 0-7 3-8 3-.5 3 2 6 2s4-2 6-1c2 2 1 6 0 8-2 2-4-1-7-1-3 1-3 2-5 2-2 1-3 0-3-2z" fill="#dcdcdc" stroke="#8a8a8a" />
                  </svg>
                }
              />
              <button type="button" aria-label="Iterar" className="ml-[9px] flex size-6 items-center">
                <svg viewBox="0 0 24 20" className="h-5 w-6" fill="none" aria-hidden="true">
                  <path d="M9 3.500H5.500q-2 0-2 2v9q0 2 2 2H10M15 16.500h3.500q2 0 2-2v-9q0-2-2-2H14" stroke="#3f7d48" strokeWidth="4.500" />
                  <path d="M9 3.500H5.500q-2 0-2 2v9q0 2 2 2H10M15 16.500h3.500q2 0 2-2v-9q0-2-2-2H14" stroke="#8cc392" strokeWidth="2.500" />
                  <path d="M15 0v7L9.500 3.500zM9 20v-7l5.500 3.500z" fill="#6aa873" stroke="#3f7d48" strokeWidth=".8" />
                </svg>
              </button>
              <button type="button" aria-label="Opções avançadas" className="ml-3 flex size-6">
                <Ico>
                  <path d="M10 9l12 12" stroke="#6f6222" strokeWidth="5" />
                  <path d="M12.500 11.500l9 9" stroke="#ecdf86" strokeWidth="3.200" />
                  <path d="M4 1c3-1 7 1 7 5l1 3-3 3-4-1C1 11 0 8 1 5l3 3 3-2-1-3z" fill="#eee" stroke="#777" />
                </Ico>
              </button>
              <DotsButton label="Procurar camada" className="ml-[9px] h-5" />
            </div>
            <div className="mt-[10px]">
              <Check label="Apenas feições selecionadas" disabled />
            </div>
            <label htmlFor="distancia" className={'mt-[9px] ' + dlgLabel}>Distância</label>
            <div className="relative mt-[7px] flex h-[22px] items-center">
              <Spin id="distancia" value="0,200000" clear className="h-5 flex-1" />
              <Combo label="Unidade" value="metros" className="ml-[9px] h-[22px] w-[85px]" />
              <button type="button" aria-label="Substituição definida por dados" className="mr-[3px] ml-[9px]">
                <svg viewBox="0 0 23 18" className="block h-[18px] w-[23px]" fill="none" aria-hidden="true">
                  <path d="M0 9l5-5v10z" fill="#777" />
                  <path d="M6 3V1.500h11.500V13M6 15v1.500h9M7 5.500h8M5 9h10M7 12.500h7" stroke="#555" strokeWidth="1.300" />
                  <path d="M15 12h8l-4 4.500z" fill="#444" />
                </svg>
              </button>
              <span className="pointer-events-none absolute -top-[6px] -left-[5px] h-[33px] w-[63px] rounded-[5px] border-4 border-[#e04040]" />
            </div>
            <label htmlFor="segmentos" className={'mt-2 ' + dlgLabel}>Segmentos</label>
            <Spin id="segmentos" value="5" className="mt-[6px] h-5" />
            <label htmlFor="fim" className={'mt-[7px] ' + dlgLabel}>Estilo da cobertura do fim</label>
            <Combo id="fim" value="Arredondado" className="mt-[5px] h-[22px]" />
            <label htmlFor="uniao" className={'mt-[6px] ' + dlgLabel}>Estilo da união</label>
            <Combo id="uniao" value="Arredondado" className="mt-[5px] h-[22px]" />
            <label htmlFor="mitre" className={'mt-[6px] ' + dlgLabel}>Limite do mitre</label>
            <Spin id="mitre" value="2,000000" className="mt-[6px] h-5" />
            <div className="mt-[9px]">
              <Check label="Dissolver Resultado" />
            </div>
            <label htmlFor="bordeada" className={'mt-[9px] ' + dlgLabel}>Bordeada</label>
            <div className="mt-[5px] flex gap-[6px]">
              <input
                id="bordeada"
                placeholder="[Criar camada temporaria]"
                className="h-[22px] min-w-0 flex-1 rounded-[2px] border border-[#a5a5a5] bg-white pl-[3px] outline-none placeholder:text-[#808080]"
              />
              <DotsButton label="Procurar arquivo" className="h-[22px]" />
            </div>
            <div className="mt-2">
              <Check label="Abrir arquivo de saída depois executar o algoritmo" checked />
            </div>
          </div>
        </div>
        <div className="flex w-4 shrink-0 flex-col items-center">
          <button type="button" aria-label="Ocultar ajuda" className="-ml-1 pt-[2px]">
            <svg viewBox="0 0 5 8" className="block h-2 w-[5px]" aria-hidden="true">
              <path d="M0 0l5 4-5 4z" fill="#4d4d4d" />
            </svg>
          </button>
          <span className={'mt-[232px] h-[15px] w-[3px] ' + dotsBg} />
        </div>
        <aside className="h-[495px] w-[190px] overflow-hidden border border-[#b4b4b4] bg-white pl-[3px] text-[#666]">
          <h3 className="mt-[7px] text-[16px] leading-[19px] font-bold text-[#505050]">Amortecedor</h3>
          {helpText.map((p, n) => (
            <p key={n} className="mt-3 leading-[13px] whitespace-nowrap">
              {p.map((line) => (
                <span key={line} className="block">{line}</span>
              ))}
            </p>
          ))}
        </aside>
      </div>
      <footer className="mb-[10px] flex shrink-0 flex-col gap-[6px] pl-[11px]">
        <div className="flex gap-[6px]">
          <div role="progressbar" aria-valuenow={0} className="flex h-[21px] w-[787px] items-center justify-center rounded-[2px] border border-[#a5a5a5] bg-white">
            0%
          </div>
          <button type="button" aria-label="Cancelar" className={'h-[21px] w-20 ' + faceBg} />
        </div>
        <div className="flex gap-[6px]">
          <button type="button" className={'h-[21px] w-[150px] whitespace-nowrap ' + faceBg}>Executar processo em Lote...</button>
          <button type="button" className="ml-[465px] h-[21px] w-20 rounded-[2px] border border-[#5aa0dc] bg-linear-to-b from-[#fdfeff] to-[#e6f1fa]">
            Executar
          </button>
          <button type="button" className={'h-[21px] w-20 ' + faceBg}>Close</button>
          <button type="button" aria-label="Help" className={'h-[21px] w-20 ' + faceBg} />
        </div>
      </footer>
    </div>
  );
}

/* ---------- status bar ---------- */

function StatusBar() {
  return (
    <footer className="flex h-[29px] shrink-0 items-center pt-[2px] pr-[7px] pl-1 font-[DejaVu_Sans_Condensed,Noto_Sans,sans-serif] text-[11px] whitespace-nowrap">
      <div className="flex h-[22px] w-[261px] items-center rounded-[3px] border border-[#a5a5a5] bg-white pl-2">
        <svg viewBox="0 0 13 13" className="size-[13px]" fill="none" stroke="#808080" strokeWidth="1.300" aria-hidden="true">
          <circle cx="5" cy="5" r="4.300" />
          <path d="M8 8l4.500 4.500" />
        </svg>
        <input aria-label="Localizar" placeholder="Escreva para localizar (Ctrl+K)" className="min-w-0 flex-1 pl-[6px] outline-none placeholder:text-[#808080]" />
      </div>
      <label htmlFor="coord" className="mr-[3px] ml-auto">Coordenada</label>
      <input id="coord" defaultValue="333951.72,7395647.21" className="h-[22px] w-[128px] rounded-[2px] border border-[#a5a5a5] bg-white pl-[6px] outline-none" />
      <button type="button" aria-label="Alternar extensão" className="mr-[12px] ml-[5px]">
        <svg viewBox="0 0 16 16" className="block size-4" fill="none" stroke="#333" aria-hidden="true">
          <path d="M2 3l9 10M5 1l8 9M1 6l8 9M3 2l2-1M13 13l2-2" strokeWidth="1.500" />
          <path d="M6 8l5-6M9 12l6-9" strokeWidth="1.200" />
        </svg>
      </button>
      <label htmlFor="escala" className="mr-1">Escala</label>
      <span className="relative flex h-[22px] w-[81px] rounded-[2px] border border-[#a5a5a5] bg-white">
        <input id="escala" defaultValue="1:78" className="min-w-0 flex-1 pl-1 outline-none" />
        <button type="button" aria-label="Escalas" className="flex w-[19px] items-center justify-center border-l border-[#b4b4b4]">
          <Caret />
        </button>
      </span>
      <button type="button" aria-label="Travar escala" className="mr-2 ml-3">
        <svg viewBox="0 0 12 15" className="block h-[15px] w-3" aria-hidden="true">
          <path d="M3 7V4.500a3 3 0 016 0V7" fill="none" stroke="#777" strokeWidth="1.800" />
          <rect x=".5" y="6.500" width="11" height="8" rx="1" fill="#5d5d5d" />
        </svg>
      </button>
      <label htmlFor="lupa" className="mr-1">Lupa</label>
      <Spin id="lupa" value="100%" className="h-[22px] w-[87px]" />
      <label htmlFor="rotacao" className="mr-2 ml-[9px]">Rotação</label>
      <Spin id="rotacao" value="0,0 °" className="mr-[7px] h-[22px] w-[84px]" />
      <Check label="Renderizar" checked />
      <button type="button" className="ml-[18px] flex items-center gap-1">
        <svg viewBox="0 0 14 14" className="size-[14px]" aria-hidden="true">
          <circle cx="7" cy="7" r="6.500" fill="#777" />
          <path d="M.5 7h13M1.500 4h11M1.500 10h11M7 .5v13M4 1c-2 4-2 8 0 12M10 1c2 4 2 8 0 12" fill="none" stroke="#ccc" strokeWidth=".7" />
        </svg>
        EPSG:31983
      </button>
      <button type="button" aria-label="Mensagens" className="ml-[18px]">
        <svg viewBox="0 0 16 16" className="block size-4" aria-hidden="true">
          <path d="M8 1c5 0 7.500 3 7.500 6.500S13 13.500 9 13.500L8.500 16l-2-2.600C3 13 .5 11 .5 7.500S3 1 8 1z" fill="#5a5a5a" />
          <path d="M3.500 6.500h2v2h-2zM7 6.500h2v2H7zM10.500 6.500h2v2h-2z" fill="#fff" />
        </svg>
      </button>
    </footer>
  );
}

/* ---------- page ---------- */

export default function App() {
  return (
    <div className="flex h-screen flex-col overflow-hidden bg-[#f0f0f0] font-[Open_Sans,Noto_Sans,sans-serif] text-[12px] text-[#111]">
      <nav className="flex h-5 shrink-0 items-center gap-[11px] border-b border-[#dcdcdc] pl-[10px] text-[#9a9a9a]">
        {menus.map(([a, k, b]) => (
          <button key={a + k + b} type="button" className="leading-[18px] whitespace-nowrap">
            {a}
            <u>{k}</u>
            {b}
          </button>
        ))}
      </nav>
      <Toolbar items={bar1} label="Projeto e navegação" />
      <Toolbar items={bar2} label="Edição e rótulos" tall />
      <div className="flex min-h-0 flex-1">
        <div role="toolbar" aria-label="Camadas" className="flex w-[52px] shrink-0 flex-col border-r border-[#b4b4b4] bg-linear-to-r from-[#fdfdfd] to-[#eeeeee] pt-[3px]">
          <span className={'mb-px ml-[18px] h-[6px] w-[18px] ' + dotsBg} />
          {sideTools.map((s) => (
            <button key={s.i} type="button" aria-label={s.t} title={s.t} className="flex h-8 items-center gap-[6px] pl-2">
              <Ico>{icons[s.i]}</Ico>
              {s.menu && <Caret />}
            </button>
          ))}
        </div>
        <div className="flex w-[342px] shrink-0 flex-col text-[11px]">
          <LayersDock />
          <span className={'my-px ml-[164px] h-[4px] w-[16px] ' + dotsBg} />
          <BrowserDock />
        </div>
        <main className="relative ml-[6px] min-w-0 flex-1 overflow-hidden bg-white">
          <MapDrawing />
          <div className={callout + ' top-[232px] left-[71px] w-[148px]'}>Logradouro</div>
          <div className={callout + ' top-[156px] left-[499px] w-[115px]'}>conexão</div>
          <div className={callout + ' top-[588px] left-[404px] w-[186px]'}>Ponto face lote</div>
          <Dialog />
        </main>
      </div>
      <StatusBar />
    </div>
  );
}
